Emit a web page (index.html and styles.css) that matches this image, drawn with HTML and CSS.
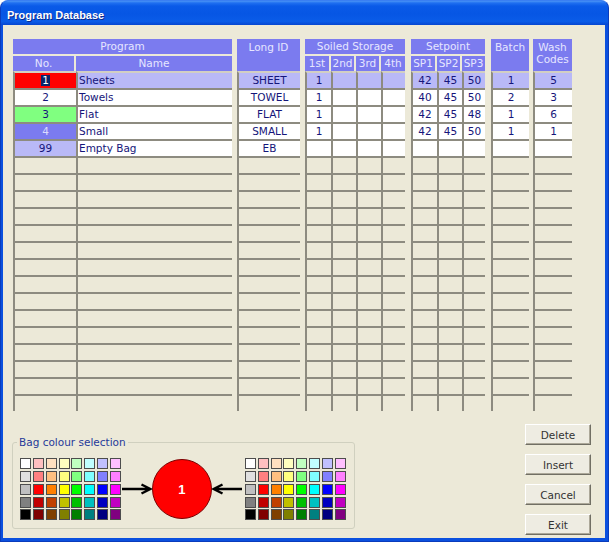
FILE: index.html
```html
<!DOCTYPE html>
<html>
<head>
<meta charset="utf-8">
<title>Program Database</title>
<link rel="stylesheet" href="styles.css">
</head>
<body>
<div class="window">
  <div class="titlebar">Program Database</div>
  <div class="client">
    <div class="grid">
      <div class="grp g-prog">
        <div class="hd top">Program</div>
        <div class="sub"><div class="hd">No.</div><div class="hd">Name</div></div>
        <div class="r"><span class="red"><b class="sel">1</b></span><span class="s l">Sheets</span></div>
        <div class="r"><span class="w">2</span><span class="w l">Towels</span></div>
        <div class="r"><span class="green">3</span><span class="w l">Flat</span></div>
        <div class="r"><span class="blue">4</span><span class="w l">Small</span></div>
        <div class="r"><span class="s">99</span><span class="w l">Empty Bag</span></div>
        <div class="r"><span></span><span></span></div>
        <div class="r"><span></span><span></span></div>
        <div class="r"><span></span><span></span></div>
        <div class="r"><span></span><span></span></div>
        <div class="r"><span></span><span></span></div>
        <div class="r"><span></span><span></span></div>
        <div class="r"><span></span><span></span></div>
        <div class="r"><span></span><span></span></div>
        <div class="r"><span></span><span></span></div>
        <div class="r"><span></span><span></span></div>
        <div class="r"><span></span><span></span></div>
        <div class="r"><span></span><span></span></div>
        <div class="r"><span></span><span></span></div>
        <div class="r"><span></span><span></span></div>
        <div class="r"><span></span><span></span></div>
      </div>
      <div class="grp g-long">
        <div class="hd tall">Long ID</div>
        <div class="r"><span class="s">SHEET</span></div>
        <div class="r"><span class="w">TOWEL</span></div>
        <div class="r"><span class="w">FLAT</span></div>
        <div class="r"><span class="w">SMALL</span></div>
        <div class="r"><span class="w">EB</span></div>
        <div class="r"><span></span></div>
        <div class="r"><span></span></div>
        <div class="r"><span></span></div>
        <div class="r"><span></span></div>
        <div class="r"><span></span></div>
        <div class="r"><span></span></div>
        <div class="r"><span></span></div>
        <div class="r"><span></span></div>
        <div class="r"><span></span></div>
        <div class="r"><span></span></div>
        <div class="r"><span></span></div>
        <div class="r"><span></span></div>
        <div class="r"><span></span></div>
        <div class="r"><span></span></div>
        <div class="r"><span></span></div>
      </div>
      <div class="grp g-soil">
        <div class="hd top">Soiled Storage</div>
        <div class="sub"><div class="hd">1st</div><div class="hd">2nd</div><div class="hd">3rd</div><div class="hd">4th</div></div>
        <div class="r"><span class="s">1</span><span class="s"></span><span class="s"></span><span class="s"></span></div>
        <div class="r"><span class="w">1</span><span class="w"></span><span class="w"></span><span class="w"></span></div>
        <div class="r"><span class="w">1</span><span class="w"></span><span class="w"></span><span class="w"></span></div>
        <div class="r"><span class="w">1</span><span class="w"></span><span class="w"></span><span class="w"></span></div>
        <div class="r"><span class="w"></span><span class="w"></span><span class="w"></span><span class="w"></span></div>
        <div class="r"><span></span><span></span><span></span><span></span></div>
        <div class="r"><span></span><span></span><span></span><span></span></div>
        <div class="r"><span></span><span></span><span></span><span></span></div>
        <div class="r"><span></span><span></span><span></span><span></span></div>
        <div class="r"><span></span><span></span><span></span><span></span></div>
        <div class="r"><span></span><span></span><span></span><span></span></div>
        <div class="r"><span></span><span></span><span></span><span></span></div>
        <div class="r"><span></span><span></span><span></span><span></span></div>
        <div class="r"><span></span><span></span><span></span><span></span></div>
        <div class="r"><span></span><span></span><span></span><span></span></div>
        <div class="r"><span></span><span></span><span></span><span></span></div>
        <div class="r"><span></span><span></span><span></span><span></span></div>
        <div class="r"><span></span><span></span><span></span><span></span></div>
        <div class="r"><span></span><span></span><span></span><span></span></div>
        <div class="r"><span></span><span></span><span></span><span></span></div>
      </div>
      <div class="grp g-sp">
        <div class="hd top">Setpoint</div>
        <div class="sub"><div class="hd">SP1</div><div class="hd">SP2</div><div class="hd">SP3</div></div>
        <div class="r"><span class="s">42</span><span class="s">45</span><span class="s">50</span></div>
        <div class="r"><span class="w">40</span><span class="w">45</span><span class="w">50</span></div>
        <div class="r"><span class="w">42</span><span class="w">45</span><span class="w">48</span></div>
        <div class="r"><span class="w">42</span><span class="w">45</span><span class="w">50</span></div>
        <div class="r"><span class="w"></span><span class="w"></span><span class="w"></span></div>
        <div class="r"><span></span><span></span><span></span></div>
        <div class="r"><span></span><span></span><span></span></div>
        <div class="r"><span></span><span></span><span></span></div>
        <div class="r"><span></span><span></span><span></span></div>
        <div class="r"><span></span><span></span><span></span></div>
        <div class="r"><span></span><span></span><span></span></div>
        <div class="r"><span></span><span></span><span></span></div>
        <div class="r"><span></span><span></span><span></span></div>
        <div class="r"><span></span><span></span><span></span></div>
        <div class="r"><span></span><span></span><span></span></div>
        <div class="r"><span></span><span></span><span></span></div>
        <div class="r"><span></span><span></span><span></span></div>
        <div class="r"><span></span><span></span><span></span></div>
        <div class="r"><span></span><span></span><span></span></div>
        <div class="r"><span></span><span></span><span></span></div>
      </div>
      <div class="grp g-batch">
        <div class="hd tall">Batch</div>
        <div class="r"><span class="s">1</span></div>
        <div class="r"><span class="w">2</span></div>
        <div class="r"><span class="w">1</span></div>
        <div class="r"><span class="w">1</span></div>
        <div class="r"><span class="w"></span></div>
        <div class="r"><span></span></div>
        <div class="r"><span></span></div>
        <div class="r"><span></span></div>
        <div class="r"><span></span></div>
        <div class="r"><span></span></div>
        <div class="r"><span></span></div>
        <div class="r"><span></span></div>
        <div class="r"><span></span></div>
        <div class="r"><span></span></div>
        <div class="r"><span></span></div>
        <div class="r"><span></span></div>
        <div class="r"><span></span></div>
        <div class="r"><span></span></div>
        <div class="r"><span></span></div>
        <div class="r"><span></span></div>
      </div>
      <div class="grp g-wash">
        <div class="hd tall">Wash Codes</div>
        <div class="r"><span class="s">5</span></div>
        <div class="r"><span class="w">3</span></div>
        <div class="r"><span class="w">6</span></div>
        <div class="r"><span class="w">1</span></div>
        <div class="r"><span class="w"></span></div>
        <div class="r"><span></span></div>
        <div class="r"><span></span></div>
        <div class="r"><span></span></div>
        <div class="r"><span></span></div>
        <div class="r"><span></span></div>
        <div class="r"><span></span></div>
        <div class="r"><span></span></div>
        <div class="r"><span></span></div>
        <div class="r"><span></span></div>
        <div class="r"><span></span></div>
        <div class="r"><span></span></div>
        <div class="r"><span></span></div>
        <div class="r"><span></span></div>
        <div class="r"><span></span></div>
        <div class="r"><span></span></div>
      </div>
    </div>

    <div class="bottom">
      <fieldset class="group">
        <legend>Bag colour selection</legend>
        <div class="pal">
          <span></span><span></span><span></span><span></span><span></span><span></span><span></span><span></span>
          <span></span><span></span><span></span><span></span><span></span><span></span><span></span><span></span>
          <span></span><span></span><span></span><span></span><span></span><span></span><span></span><span></span>
          <span></span><span></span><span></span><span></span><span></span><span></span><span></span><span></span>
          <span></span><span></span><span></span><span></span><span></span><span></span><span></span><span></span>
        </div>
        <svg class="arrow a-left" width="30" height="14" viewBox="0 0 30 14"><path d="M0 7H28M19.5 2.5L28.5 7L19.5 11.5" fill="none" stroke="#000" stroke-width="2.4"/></svg>
        <div class="bag">1</div>
        <svg class="arrow a-right" width="30" height="14" viewBox="0 0 30 14"><path d="M30 7H2M10.5 2.5L1.5 7L10.5 11.5" fill="none" stroke="#000" stroke-width="2.4"/></svg>
        <div class="pal">
          <span></span><span></span><span></span><span></span><span></span><span></span><span></span><span></span>
          <span></span><span></span><span></span><span></span><span></span><span></span><span></span><span></span>
          <span></span><span></span><span></span><span></span><span></span><span></span><span></span><span></span>
          <span></span><span></span><span></span><span></span><span></span><span></span><span></span><span></span>
          <span></span><span></span><span></span><span></span><span></span><span></span><span></span><span></span>
        </div>
      </fieldset>
      <div class="btns">
        <button class="btn">Delete</button>
        <button class="btn">Insert</button>
        <button class="btn">Cancel</button>
        <button class="btn">Exit</button>
      </div>
    </div>
  </div>
</div>
</body>
</html>
```
FILE: styles.css
```css
* { box-sizing: border-box; }
body {
  margin: 0;
  background: #ffffff;
  font-family: "DejaVu Sans", sans-serif;
  font-size: 10.5px;
}
.window {
  width: 609px;
  height: 542px;
  border: 1px solid #0a3cbc;
  border-top-color: #3a7ff2;
  border-radius: 8px 8px 0 0;
  background: #0b50de;
  display: flex;
  flex-direction: column;
  overflow: hidden;
}
.titlebar {
  height: 24px;
  flex: none;
  padding: 3px 0 0 6px;
  display: flex;
  align-items: center;
  background: linear-gradient(#4a93f5 0px, #1f6ff0 2px, #0a5ae8 5px, #0656e4 55%, #0a5ce8 85%, #0646d0 100%);
  color: #ffffff;
  font: bold 11px "Liberation Sans", sans-serif;
  text-shadow: 1px 1px 0 #0f2a8a;
}
.client {
  flex: 1;
  margin: 0 3px 3px 2px;
  background: #ece9d8;
  padding: 14px 0 0 10px;
  display: flex;
  flex-direction: column;
}
.grid { display: flex; align-items: flex-start; }
.grp { display: flex; flex-direction: column; }
.g-prog { width: 219px; --cols: 63px 156px; }
.g-long { width: 63px; margin-left: 5px; --cols: 63px; }
.g-soil { width: 100px; margin-left: 5px; --cols: 26px 25px 25px 24px; }
.g-sp { width: 74px; margin-left: 6px; --cols: 26px 25px 23px; }
.g-batch { width: 38px; margin-left: 6px; --cols: 38px; }
.g-wash { width: 39px; margin-left: 4px; --cols: 39px; }

.hd {
  background: #7b7bef;
  color: #e6e6ff;
  text-align: center;
  height: 15px;
  line-height: 15px;
  white-space: nowrap;
  overflow: hidden;
}
.top { margin-bottom: 2px; }
.sub { display: grid; grid-template-columns: var(--cols); }
.sub > .hd:not(:last-child) { border-right: 2px solid #ece9d8; }
.hd.tall {
  height: 32px;
  line-height: 12px;
  padding-top: 2px;
  white-space: normal;
}
.r {
  display: grid;
  grid-template-columns: var(--cols);
  height: 17px;
}
.r > span {
  border-top: 2px solid #8d8b80;
  border-left: 2px solid #8d8b80;
  line-height: 15px;
  text-align: center;
  color: #15157a;
  white-space: nowrap;
  overflow: hidden;
}
.sub + .r > span, .tall + .r > span { border-top-color: #d2cfc3; }
.r > span.l { text-align: left; padding-left: 1px; }
.r > .w { background: #ffffff; }
.r > .s { background: #b9b9f7; }
.r > .red { background: #ff0000; }
.r > .green { background: #80ff80; }
.r > .blue { background: #7b7bef; color: #dcdcff; }
.sel {
  font-weight: normal;
  display: inline-block;
  line-height: 11px;
  padding: 0 1px;
  background: #0a246a;
  color: #ffffff;
}

.bottom {
  display: flex;
  justify-content: space-between;
  align-items: flex-start;
}
.group {
  margin: 25px 0 0 -1px;
  padding: 9px 8px 8px 7px;
  border: 1px solid #d0d0bf;
  border-radius: 3px;
  display: flex;
  align-items: center;
  min-inline-size: 0;
}
.group legend {
  margin-left: -3px;
  padding: 0 2px;
  line-height: 13px;
  font-size: 10.5px;
  color: #26399a;
}
.pal {
  display: grid;
  grid-template-columns: repeat(8, 11px);
  grid-auto-rows: 11px;
  gap: 1.85px;
}
.pal span { border: 1px solid #4d4d4d; }
.pal span:nth-child(1) { background: #ffffff; }
.pal span:nth-child(2) { background: #ffc0c0; }
.pal span:nth-child(3) { background: #ffe0c0; }
.pal span:nth-child(4) { background: #ffffc0; }
.pal span:nth-child(5) { background: #c0ffc0; }
.pal span:nth-child(6) { background: #c0ffff; }
.pal span:nth-child(7) { background: #c0c0ff; }
.pal span:nth-child(8) { background: #ffc0ff; }
.pal span:nth-child(9) { background: #e0e0e0; }
.pal span:nth-child(10) { background: #ff8080; }
.pal span:nth-child(11) { background: #ffc080; }
.pal span:nth-child(12) { background: #ffff80; }
.pal span:nth-child(13) { background: #80ff80; }
.pal span:nth-child(14) { background: #80ffff; }
.pal span:nth-child(15) { background: #8080ff; }
.pal span:nth-child(16) { background: #ff80ff; }
.pal span:nth-child(17) { background: #c0c0c0; }
.pal span:nth-child(18) { background: #ff0000; }
.pal span:nth-child(19) { background: #ff8000; }
.pal span:nth-child(20) { background: #ffff00; }
.pal span:nth-child(21) { background: #00ff00; }
.pal span:nth-child(22) { background: #00ffff; }
.pal span:nth-child(23) { background: #0000ff; }
.pal span:nth-child(24) { background: #ff00ff; }
.pal span:nth-child(25) { background: #808080; }
.pal span:nth-child(26) { background: #c00000; }
.pal span:nth-child(27) { background: #c04000; }
.pal span:nth-child(28) { background: #c0c000; }
.pal span:nth-child(29) { background: #00c000; }
.pal span:nth-child(30) { background: #00c0c0; }
.pal span:nth-child(31) { background: #0000c0; }
.pal span:nth-child(32) { background: #c000c0; }
.pal span:nth-child(33) { background: #000000; }
.pal span:nth-child(34) { background: #800000; }
.pal span:nth-child(35) { background: #804000; }
.pal span:nth-child(36) { background: #808000; }
.pal span:nth-child(37) { background: #008000; }
.pal span:nth-child(38) { background: #008080; }
.pal span:nth-child(39) { background: #000080; }
.pal span:nth-child(40) { background: #800080; }

.arrow { flex: none; display: block; }
.a-left { margin-left: 1px; }
.a-right { margin-right: 3px; }
.bag {
  width: 60px;
  height: 60px;
  flex: none;
  border-radius: 50%;
  background: #ff0000;
  border: 1px solid #7a0000;
  display: flex;
  align-items: center;
  justify-content: center;
  color: #ffffff;
  font: bold 13px "Liberation Sans", sans-serif;
}

.btns {
  display: flex;
  flex-direction: column;
  gap: 9px;
  margin: 13px 14px 0 0;
}
.btn {
  width: 66px;
  height: 21px;
  padding: 0;
  background: #eeece2;
  border: 1px solid;
  border-color: #ffffff #716f64 #716f64 #ffffff;
  box-shadow: inset -1px -1px 0 #aca899;
  font-family: "DejaVu Sans", sans-serif;
  font-size: 10.5px;
  color: #333333;
}
```
